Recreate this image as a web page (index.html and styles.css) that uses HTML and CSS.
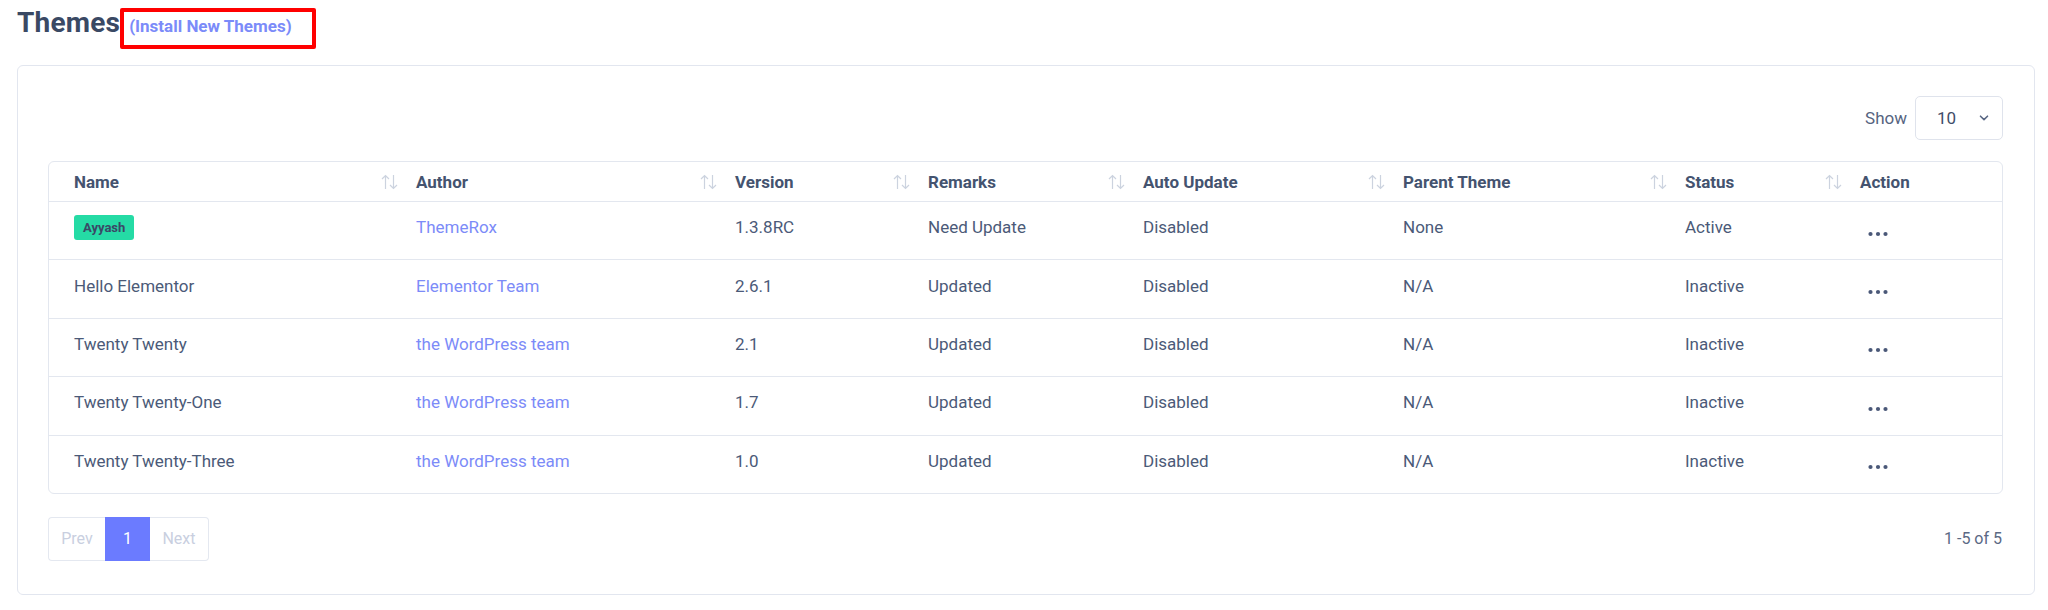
FILE: index.html
```html
<!DOCTYPE html>
<html lang="en">
<head>
  <meta charset="UTF-8">
  <title>Themes</title>
  <link rel="stylesheet" href="styles.css">
</head>
<body>
  <div class="page">
    <div class="page-head">
      <h1>Themes</h1>
      <a href="#" class="install-link">(Install New Themes)</a>
    </div>

    <div class="card">
      <div class="toolbar">
        <span class="show-label">Show</span>
        <div class="show-select">
          <span>10</span>
          <svg width="10" height="6" viewBox="0 0 10 6"><path d="M1.5 1.2 L5 4.6 L8.5 1.2" fill="none" stroke="#5a6884" stroke-width="1.6" stroke-linecap="round" stroke-linejoin="round"/></svg>
        </div>
      </div>

      <div class="table-wrap">
        <table class="themes-table">
          <colgroup>
            <col class="c-name">
            <col class="c-author">
            <col class="c-version">
            <col class="c-remarks">
            <col class="c-auto">
            <col class="c-parent">
            <col class="c-status">
            <col class="c-action">
          </colgroup>
          <thead>
            <tr>
              <th><div class="th-in">Name<span class="sort"></span></div></th>
              <th><div class="th-in">Author<span class="sort"></span></div></th>
              <th><div class="th-in">Version<span class="sort"></span></div></th>
              <th><div class="th-in">Remarks<span class="sort"></span></div></th>
              <th><div class="th-in">Auto Update<span class="sort"></span></div></th>
              <th><div class="th-in">Parent Theme<span class="sort"></span></div></th>
              <th><div class="th-in">Status<span class="sort"></span></div></th>
              <th><div class="th-in">Action</div></th>
            </tr>
          </thead>
          <tbody id="rows"></tbody>
        </table>
      </div>

      <div class="table-foot">
        <div class="pager">
          <span class="pg prev">Prev</span>
          <span class="pg current">1</span>
          <span class="pg next">Next</span>
        </div>
        <span class="count">1 -5 of 5</span>
      </div>
    </div>
  </div>

  <script>
    // theme list
    const themes = [
      { name: 'Ayyash', badge: true, author: 'ThemeRox', version: '1.3.8RC', remarks: 'Need Update', auto: 'Disabled', parent: 'None', status: 'Active' },
      { name: 'Hello Elementor', author: 'Elementor Team', version: '2.6.1', remarks: 'Updated', auto: 'Disabled', parent: 'N/A', status: 'Inactive' },
      { name: 'Twenty Twenty', author: 'the WordPress team', version: '2.1', remarks: 'Updated', auto: 'Disabled', parent: 'N/A', status: 'Inactive' },
      { name: 'Twenty Twenty-One', author: 'the WordPress team', version: '1.7', remarks: 'Updated', auto: 'Disabled', parent: 'N/A', status: 'Inactive' },
      { name: 'Twenty Twenty-Three', author: 'the WordPress team', version: '1.0', remarks: 'Updated', auto: 'Disabled', parent: 'N/A', status: 'Inactive' }
    ];

    const dots = '<svg width="20" height="6" viewBox="0 0 20 6"><circle cx="2.5" cy="3" r="2.1" fill="#4a5878"/><circle cx="10" cy="3" r="2.1" fill="#4a5878"/><circle cx="17.5" cy="3" r="2.1" fill="#4a5878"/></svg>';
    const sortIcon = '<svg width="17" height="16" viewBox="0 0 17 16"><path d="M4.5 15 V1.5 M1 5 L4.5 1.5 L8 5 M12.5 1 V14.5 M9 11 L12.5 14.5 L16 11" fill="none" stroke="#ccd3df" stroke-width="1.2"/></svg>';

    document.querySelectorAll('.sort').forEach(function(el) {
      el.innerHTML = sortIcon;
    });

    const tbody = document.getElementById('rows');
    themes.forEach(function(t) {
      const tr = document.createElement('tr');
      const nameCell = t.badge ? '<span class="badge">' + t.name + '</span>' : t.name;
      tr.innerHTML =
        '<td>' + nameCell + '</td>' +
        '<td><a href="#" class="author">' + t.author + '</a></td>' +
        '<td>' + t.version + '</td>' +
        '<td>' + t.remarks + '</td>' +
        '<td>' + t.auto + '</td>' +
        '<td>' + t.parent + '</td>' +
        '<td>' + t.status + '</td>' +
        '<td class="action"><span class="dots">' + dots + '</span></td>';
      tbody.appendChild(tr);
    });
  </script>
</body>
</html>
```

FILE: styles.css
```css
body {
  margin: 0;
  font-family: Roboto, "Noto Sans", Arial, sans-serif;
  color: #4b5a78;
  background: #fff;
}

.page {
  padding: 0 13px 0 17px;
}

.page-head {
  display: flex;
  align-items: baseline;
  padding-top: 2px;
}

h1 {
  margin: 0;
  font-size: 28px;
  line-height: 42px;
  font-weight: 700;
  color: #3a4964;
  letter-spacing: 0.2px;
}

.install-link {
  display: inline-block;
  border: 4px solid #ff0000;
  border-radius: 2px;
  padding: 4px 20px 9px 5px;
  font-size: 17px;
  line-height: 20px;
  font-weight: 700;
  color: #7b8bf9;
  text-decoration: none;
}

.card {
  margin-top: 16px;
  border: 1px solid #e2e6ef;
  border-radius: 6px;
  padding: 30px 31px 33px 30px;
}

.toolbar {
  display: flex;
  justify-content: flex-end;
  align-items: center;
  gap: 8px;
  margin-bottom: 21px;
}

.show-label {
  font-size: 17px;
  color: #56647f;
}

.show-select {
  box-sizing: border-box;
  width: 88px;
  height: 44px;
  border: 1px solid #dfe3ec;
  border-radius: 5px;
  display: flex;
  align-items: center;
  justify-content: space-between;
  padding: 0 13px 0 21px;
  font-size: 17px;
  color: #3f4d69;
}

.table-wrap {
  border: 1px solid #e3e7ef;
  border-radius: 6px;
  overflow: hidden;
}

.themes-table {
  width: 100%;
  border-collapse: separate;
  border-spacing: 0;
  table-layout: fixed;
}

.c-name { width: 358px; }
.c-author { width: 319px; }
.c-version { width: 193px; }
.c-remarks { width: 215px; }
.c-auto { width: 260px; }
.c-parent { width: 282px; }
.c-status { width: 175px; }
.c-action { width: auto; }

.themes-table th {
  height: 39px;
  padding: 0 9px;
  text-align: left;
  font-size: 17px;
  font-weight: 700;
  color: #44536f;
}

.themes-table th:first-child,
.themes-table td:first-child {
  padding-left: 25px;
}

.th-in {
  display: flex;
  align-items: center;
}

.sort {
  margin-left: auto;
  display: flex;
}

.themes-table td {
  box-sizing: border-box;
  height: 58.4px;
  padding: 0 9px 7px;
  border-top: 1px solid #e3e7ef;
  font-size: 17px;
  color: #4b5a78;
  vertical-align: middle;
  white-space: nowrap;
}

.themes-table td.action {
  padding-bottom: 0;
}

.dots {
  display: inline-flex;
  margin-left: 8px;
  margin-top: 4px;
}

.author {
  color: #7c8bf8;
  text-decoration: none;
}

.badge {
  display: inline-block;
  height: 25px;
  line-height: 25px;
  padding: 0 9px;
  border-radius: 3px;
  background: #25dba5;
  color: #3a4866;
  font-size: 13px;
  font-weight: 700;
}

.table-foot {
  margin-top: 23px;
  display: flex;
  justify-content: space-between;
  align-items: center;
}

.pager {
  display: flex;
}

.pg {
  box-sizing: border-box;
  height: 44px;
  display: flex;
  align-items: center;
  justify-content: center;
  font-size: 16px;
  color: #c9cfdf;
}

.prev {
  width: 57px;
  border: 1px solid #e4e8f0;
  border-right: none;
  border-radius: 4px 0 0 4px;
}

.current {
  width: 45px;
  background: #6b7bff;
  color: #fff;
}

.next {
  width: 59px;
  border: 1px solid #e4e8f0;
  border-left: none;
  border-radius: 0 4px 4px 0;
}

.count {
  font-size: 16px;
  color: #5b6984;
  margin-right: 1px;
}
```
